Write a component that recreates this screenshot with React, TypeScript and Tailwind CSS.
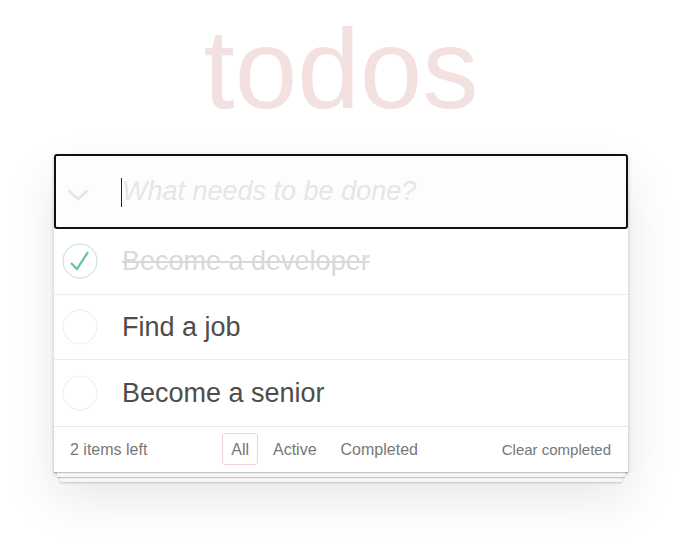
import { useState } from 'react';

type Todo = { id: number; title: string; done: boolean };

const initial: Todo[] = [
  { id: 1, title: 'Become a developer', done: true },
  { id: 2, title: 'Find a job', done: false },
  { id: 3, title: 'Become a senior', done: false },
];

function Toggle({ done }: { done: boolean }) {
  return (
    <svg width="40" height="40" viewBox="0 0 40 40" className="shrink-0">
      <circle cx="20" cy="20" r="17" fill="none" stroke={done ? '#bddad5' : '#ededed'} strokeWidth="1" />
      {done && (
        <polyline points="11,22 17,28 28,11" fill="none" stroke="#5dc2af" strokeWidth="2.2" strokeLinejoin="miter" />
      )}
    </svg>
  );
}

export default function App() {
  const [todos] = useState<Todo[]>(initial);
  const left = todos.filter((t) => !t.done).length;

  return (
    <div className="min-h-[537px] bg-white pt-[13px] font-['Liberation_Sans',Arial,sans-serif]">
      <div className="ml-[54px] w-[574px]">
        <h1 className="h-[112px] text-center text-[112.5px] leading-none font-thin text-[rgba(175,47,47,0.15)]">todos</h1>

        <section className="mt-[29px] bg-white shadow-[0_2px_4px_0_rgba(0,0,0,0.2),0_25px_50px_0_rgba(0,0,0,0.1)]">
          <div className="relative flex h-[75px] items-center rounded-[3px] border-2 border-[#111] bg-[#fdfdfd]">
            <div className="mt-[6px] flex w-[66px] shrink-0 justify-start pl-[11px]">
              <svg width="22" height="12" viewBox="0 0 22 12">
                <polyline points="1.5,1.5 11,10 20.5,1.5" fill="none" stroke="#e6e6e6" strokeWidth="3" />
              </svg>
            </div>
            <span className="absolute left-[65px] top-[22px] h-[29px] w-px bg-[#222]" />
            <input
              className="h-full flex-1 bg-transparent text-[27px] text-[#4d4d4d] outline-none placeholder:italic placeholder:text-[#e6e6e6]"
              placeholder="What needs to be done?"
            />
          </div>

          <ul>
            {todos.map((t, i) => (
              <li
                key={t.id}
                className={`flex h-[65.5px] items-center pl-[6px] ${i < todos.length - 1 ? 'border-b border-[#ededed]' : ''}`}
              >
                <Toggle done={t.done} />
                <span
                  className={`ml-[22px] text-[27px] ${t.done ? 'text-[#d9d9d9] line-through' : 'text-[#4d4d4d]'}`}
                >
                  {t.title}
                </span>
              </li>
            ))}
          </ul>

          <footer className="flex h-[46px] items-center justify-between border-t border-[#e6e6e6] bg-white pl-[16px] pr-[17px] pt-[2px] text-[#777] shadow-[0_1px_1px_rgba(0,0,0,0.2),0_8px_0_-3px_#f6f6f6,0_9px_1px_-3px_rgba(0,0,0,0.2),0_16px_0_-6px_#f6f6f6,0_17px_2px_-6px_rgba(0,0,0,0.2)]">
            <span className="text-[16px]">{left} items left</span>
            <div className="-mt-[2px] flex items-center gap-[6px] text-[16px]">
              <a className="flex h-[32px] items-center rounded-[3px] border border-[rgba(175,47,47,0.2)] px-[8px] pt-[2px]">All</a>
              <a className="flex h-[32px] items-center rounded-[3px] border border-transparent px-[8px] pt-[2px]">Active</a>
              <a className="flex h-[32px] items-center rounded-[3px] border border-transparent px-[8px] pt-[2px]">Completed</a>
            </div>
            <span className="text-[15px]">Clear completed</span>
          </footer>
        </section>
      </div>
    </div>
  );
}
